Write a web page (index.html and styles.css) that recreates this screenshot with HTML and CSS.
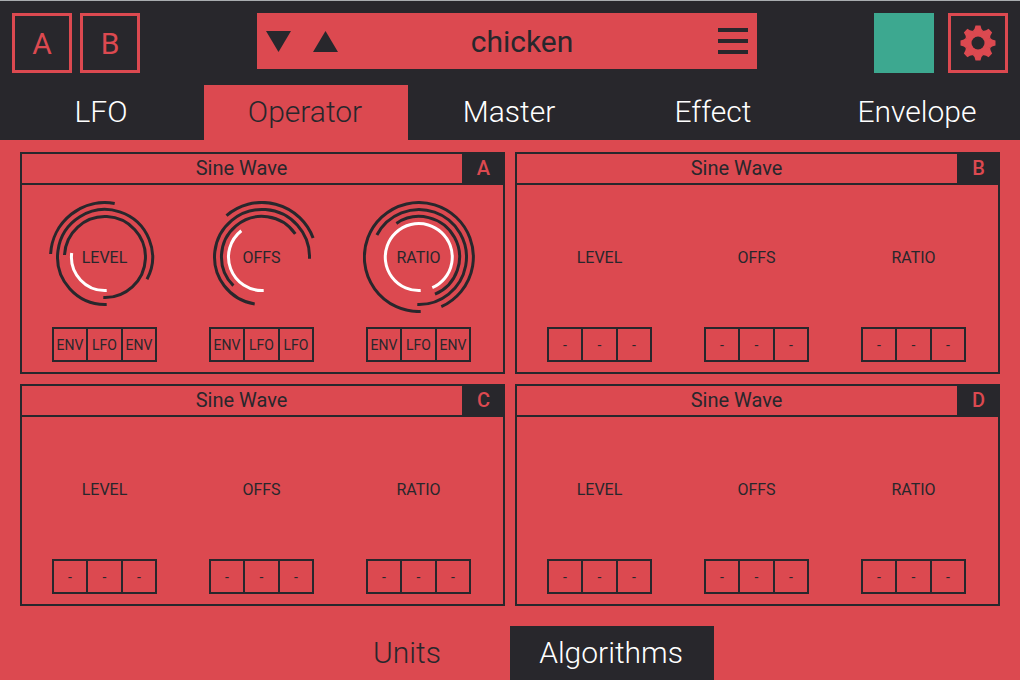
FILE: index.html
```html
<!DOCTYPE html>
<html lang="en">
<head>
<meta charset="utf-8">
<title>chicken</title>
<link rel="stylesheet" href="styles.css">
</head>
<body>
<header class="topbar">
  <div class="slots">
    <button class="square">A</button>
    <button class="square">B</button>
  </div>
  <div class="preset">
    <button class="icon-button" aria-label="Next preset"><svg width="25" height="21" viewBox="0 0 25 21"><path d="M0 0H25L12.5 21Z"/></svg></button>
    <button class="icon-button" aria-label="Previous preset"><svg width="25" height="21" viewBox="0 0 25 21"><path d="M0 21H25L12.5 0Z"/></svg></button>
    <span class="preset-name">chicken</span>
    <button class="icon-button menu" aria-label="Menu"><svg width="30" height="26" viewBox="0 0 30 26"><path d="M0 0H30V4H0ZM0 11H30V15H0ZM0 22H30V26H0Z"/></svg></button>
  </div>
  <div class="tools">
    <button class="square swatch" aria-label="Indicator"></button>
    <button class="square" aria-label="Settings">
      <svg class="gear" width="36" height="36" viewBox="-18 -18 36 36">
        <defs><path id="tooth" d="M-2.5-17.5H2.5Q3.2-13.4 5.1-12.3L0 0L-5.1-12.3Q-3.2-13.4-2.5-17.5Z"/></defs>
        <circle r="12.5"/>
        <use href="#tooth"/><use href="#tooth" transform="rotate(45)"/><use href="#tooth" transform="rotate(90)"/><use href="#tooth" transform="rotate(135)"/><use href="#tooth" transform="rotate(180)"/><use href="#tooth" transform="rotate(225)"/><use href="#tooth" transform="rotate(270)"/><use href="#tooth" transform="rotate(315)"/>
        <circle class="hole" r="6.5"/>
      </svg>
    </button>
  </div>
</header>
<nav class="tabs">
  <button class="tab">LFO</button>
  <button class="tab selected">Operator</button>
  <button class="tab">Master</button>
  <button class="tab">Effect</button>
  <button class="tab">Envelope</button>
</nav>
<main class="panels">
  <section class="panel">
    <div class="panel-head"><button class="wave">Sine Wave</button><span class="badge">A</span></div>
    <div class="panel-body">
      <div class="control">
        <div class="knob">
          <svg class="rings" viewBox="-56 -56 112 112">
            <path d="M-54.4-3A54.5 54.5 0 0 1 9.7-53.6"/>
            <path d="M1.7 47.5A47.5 47.5 0 1 1 42 22.3"/>
            <path d="M-40.5-2A40.5 40.5 0 1 1-1.7 40.5"/>
            <path class="value" d="M1.7 33.5A33.5 33.5 0 0 1-33.3-4"/>
          </svg>
          <span class="label">LEVEL</span>
        </div>
        <div class="sources"><button>ENV</button><button>LFO</button><button>ENV</button></div>
      </div>
      <div class="control">
        <div class="knob">
          <svg class="rings" viewBox="-56 -56 112 112">
            <path d="M-35.5-41.4A54.5 54.5 0 0 1 51.1-19"/>
            <path d="M-7.3 46.9A47.5 47.5 0 1 1 47.5 1.7"/>
            <path d="M-28.6 28.6A40.5 40.5 0 1 1 33.3-23.1"/>
            <path class="value" d="M1.7 33.5A33.5 33.5 0 0 1-20.7-26.3"/>
          </svg>
          <span class="label">OFFS</span>
        </div>
        <div class="sources"><button>ENV</button><button>LFO</button><button>LFO</button></div>
      </div>
      <div class="control">
        <div class="knob">
          <svg class="rings" viewBox="-56 -56 112 112">
            <path d="M1.7 54.5A54.5 54.5 0 1 1 22.3 49.7"/>
            <path d="M-42.1-22A47.5 47.5 0 1 1-1.7 47.5"/>
            <path d="M-22.6-33.6A40.5 40.5 0 1 1 16 37.2"/>
            <path class="value" d="M1.7 33.5A33.5 33.5 0 1 1 13.3 30.7"/>
          </svg>
          <span class="label">RATIO</span>
        </div>
        <div class="sources"><button>ENV</button><button>LFO</button><button>ENV</button></div>
      </div>
    </div>
  </section>
  <section class="panel">
    <div class="panel-head"><button class="wave">Sine Wave</button><span class="badge">B</span></div>
    <div class="panel-body">
      <div class="control"><div class="knob"><span class="label">LEVEL</span></div><div class="sources"><button>-</button><button>-</button><button>-</button></div></div>
      <div class="control"><div class="knob"><span class="label">OFFS</span></div><div class="sources"><button>-</button><button>-</button><button>-</button></div></div>
      <div class="control"><div class="knob"><span class="label">RATIO</span></div><div class="sources"><button>-</button><button>-</button><button>-</button></div></div>
    </div>
  </section>
  <section class="panel">
    <div class="panel-head"><button class="wave">Sine Wave</button><span class="badge">C</span></div>
    <div class="panel-body">
      <div class="control"><div class="knob"><span class="label">LEVEL</span></div><div class="sources"><button>-</button><button>-</button><button>-</button></div></div>
      <div class="control"><div class="knob"><span class="label">OFFS</span></div><div class="sources"><button>-</button><button>-</button><button>-</button></div></div>
      <div class="control"><div class="knob"><span class="label">RATIO</span></div><div class="sources"><button>-</button><button>-</button><button>-</button></div></div>
    </div>
  </section>
  <section class="panel">
    <div class="panel-head"><button class="wave">Sine Wave</button><span class="badge">D</span></div>
    <div class="panel-body">
      <div class="control"><div class="knob"><span class="label">LEVEL</span></div><div class="sources"><button>-</button><button>-</button><button>-</button></div></div>
      <div class="control"><div class="knob"><span class="label">OFFS</span></div><div class="sources"><button>-</button><button>-</button><button>-</button></div></div>
      <div class="control"><div class="knob"><span class="label">RATIO</span></div><div class="sources"><button>-</button><button>-</button><button>-</button></div></div>
    </div>
  </section>
</main>
<nav class="tabs views">
  <button class="tab selected">Units</button>
  <button class="tab">Algorithms</button>
</nav>
</body>
</html>
```
FILE: styles.css
```css
:root {
  --red: #dc4950;
  --dark: #28272c;
  --green: #3da890;
}
* { box-sizing: border-box; }
body {
  margin: 0;
  min-height: 100vh;
  background: var(--red);
  color: var(--dark);
  font-family: Roboto, "Liberation Sans", sans-serif;
}
button {
  margin: 0;
  padding: 0;
  border: 0;
  background: none;
  color: inherit;
  font: inherit;
}
svg { display: block; fill: currentColor; }

.topbar {
  display: flex;
  justify-content: space-between;
  align-items: flex-start;
  padding: 12px;
  border-top: 1px solid #a9acaf;
  background: var(--dark);
}
.slots { display: flex; gap: 8px; }
.tools { display: flex; gap: 14px; }
.square {
  display: grid;
  place-items: center;
  width: 60px;
  height: 60px;
  border: 3px solid var(--red);
  color: var(--red);
  font-size: 30px;
}
.swatch { border: 0; background: var(--green); }
.hole { fill: var(--dark); }
.preset {
  display: flex;
  flex: 0 1 500px;
  align-items: center;
  height: 56px;
  padding: 0 9px;
  background: var(--red);
}
.icon-button { margin-right: 22px; }
.icon-button.menu { margin: 0; }
.preset-name { flex: 1; padding-right: 34px; text-align: center; font-size: 30px; }

.tabs { display: flex; background: var(--dark); }
.tab {
  flex: 0 0 20%;
  height: 55px;
  padding: 0 2px 2px 0;
  color: #fff;
  background: var(--dark);
  font-size: 30px;
  font-weight: 300;
}
.tab.selected { background: var(--red); color: var(--dark); }
.views { justify-content: center; background: var(--red); }
.views .tab { height: 54px; }

.panels {
  display: grid;
  grid-template-columns: 1fr 1fr;
  gap: 10px;
  padding: 12px 20px 20px;
}
.panel { border: 2px solid var(--dark); }
.panel-head {
  display: flex;
  height: 31px;
  border-bottom: 2px solid var(--dark);
  font-size: 20px;
}
.wave { flex: 1; padding: 0 1px 2px 0; }
.badge {
  display: grid;
  place-items: center;
  width: 41px;
  padding: 0 0 2px 2px;
  background: var(--dark);
  color: var(--red);
  font-weight: 500;
}
.panel-body {
  display: grid;
  grid-template-columns: repeat(3, 1fr);
  padding: 16px 6px 10px 4px;
}
.control { display: grid; justify-items: center; gap: 14px; }
.knob {
  display: grid;
  place-items: center;
  width: 112px;
  height: 112px;
}
.rings, .label { grid-area: 1 / 1; }
.rings { width: 112px; fill: none; stroke: var(--dark); stroke-width: 3; }
.rings .value { stroke: #fff; }
.label { font-size: 16px; }
.sources {
  display: grid;
  grid-template-columns: 32px 33px 32px;
  gap: 2px;
  height: 35px;
  border: 2px solid var(--dark);
  background: var(--dark);
  font-size: 14px;
}
.sources button { background: var(--red); }
```
